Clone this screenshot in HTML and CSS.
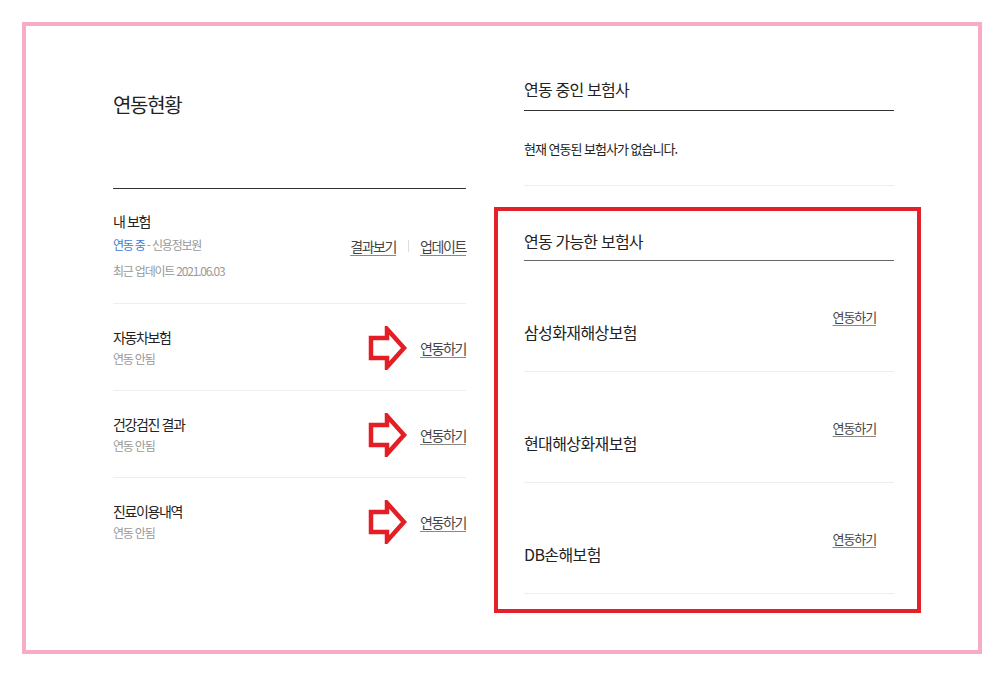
FILE: index.html
```html
<!DOCTYPE html>
<html lang="ko">
<head>
  <meta charset="UTF-8" />
  <meta name="viewport" content="width=device-width, initial-scale=1.0"/>
  <title>연동현황</title>
  <link rel="stylesheet" href="styles.css">
</head>
<body>

  <div class="frame">

    <!-- 왼쪽: 연동현황 -->
    <div class="status">
      <div class="status-head">
        <h1>연동현황</h1>
      </div>

      <div class="status-row first">
        <div class="info">
          <h2>내 보험</h2>
          <p class="state"><span class="on">연동 중</span> - 신용정보원</p>
          <p class="date">최근 업데이트 2021.06.03</p>
        </div>
        <div class="links">
          <a href="#">결과보기</a>
          <span class="sep"></span>
          <a href="#">업데이트</a>
        </div>
      </div>

      <div class="status-row">
        <div class="info">
          <h2>자동차보험</h2>
          <p class="state">연동 안됨</p>
        </div>
        <div class="links">
          <svg class="arrow" width="40" height="44" viewBox="0 0 40 44"><path d="M3 12 H19 V3 L36 22 L19 41 V32 H3 Z"/></svg>
          <a href="#">연동하기</a>
        </div>
      </div>

      <div class="status-row">
        <div class="info">
          <h2>건강검진 결과</h2>
          <p class="state">연동 안됨</p>
        </div>
        <div class="links">
          <svg class="arrow" width="40" height="44" viewBox="0 0 40 44"><path d="M3 12 H19 V3 L36 22 L19 41 V32 H3 Z"/></svg>
          <a href="#">연동하기</a>
        </div>
      </div>

      <div class="status-row last">
        <div class="info">
          <h2>진료이용내역</h2>
          <p class="state">연동 안됨</p>
        </div>
        <div class="links">
          <svg class="arrow" width="40" height="44" viewBox="0 0 40 44"><path d="M3 12 H19 V3 L36 22 L19 41 V32 H3 Z"/></svg>
          <a href="#">연동하기</a>
        </div>
      </div>
    </div>

    <!-- 오른쪽: 보험사 -->
    <div class="insurers">
      <div class="section current">
        <h3>연동 중인 보험사</h3>
        <p class="empty">현재 연동된 보험사가 없습니다.</p>
      </div>

      <div class="section available">
        <h3>연동 가능한 보험사</h3>
        <div class="company">
          <span class="name">삼성화재해상보험</span>
          <a href="#">연동하기</a>
        </div>
        <div class="company">
          <span class="name">현대해상화재보험</span>
          <a href="#">연동하기</a>
        </div>
        <div class="company">
          <span class="name">DB손해보험</span>
          <a href="#">연동하기</a>
        </div>
      </div>
    </div>

  </div>

</body>
</html>
```

FILE: styles.css
```css
body {
  margin: 0;
  background-color: #fff;
  font-family: "Noto Sans CJK KR", "Noto Sans", sans-serif;
  color: #222;
}

.frame {
  margin: 22px;
  width: 952px;
  height: 624px;
  border: 4px solid #f6abc7;
  display: flex;
  align-items: flex-start;
}

a {
  color: #444;
  text-decoration: underline;
  text-decoration-color: #888;
  text-underline-offset: 3px;
}

/* left column */
.status {
  width: 353px;
  margin: 51px 0 0 87px;
}

.status-head {
  padding: 13px 0 68px;
  border-bottom: 1px solid #333;
}

h1 {
  margin: 0;
  font-size: 20px;
  line-height: 30px;
  font-weight: 400;
  letter-spacing: -1.3px;
}

.status-row {
  display: flex;
  justify-content: space-between;
  align-items: center;
  padding: 23px 0 22px;
  border-bottom: 1px solid #eee;
}

.status-row.first {
  padding: 22px 0 23px;
}

.status-row.last {
  border-bottom: none;
}

.info h2 {
  margin: 0;
  font-size: 14px;
  line-height: 20px;
  font-weight: 400;
  letter-spacing: -1.4px;
}

.info p {
  margin: 0;
  font-size: 12px;
  line-height: 18px;
  color: #999;
  letter-spacing: -1.2px;
}

.info .state {
  margin-top: 3px;
}

.first .state {
  margin-top: 5px;
}

.info .date {
  margin-top: 8px;
}

.on {
  color: #3b7bd4;
}

.links {
  display: flex;
  align-items: center;
  font-size: 14px;
  letter-spacing: -1.4px;
}

.links a {
  line-height: 20px;
}

.sep {
  width: 1px;
  height: 12px;
  margin: 0 11px 0 12px;
  background-color: #ddd;
}

.arrow {
  margin: -2px 12px -2px 0;
}

.arrow path {
  fill: #fff;
  stroke: #e31e25;
  stroke-width: 4.5;
  stroke-linejoin: miter;
}

/* right column */
.insurers {
  width: 427px;
  margin: 51px 0 0 28px;
}

.section {
  padding: 0 27px 0 30px;
}

h3 {
  margin: 0;
  padding-bottom: 9px;
  font-size: 16px;
  line-height: 24px;
  font-weight: 400;
  letter-spacing: -0.8px;
  border-bottom: 1px solid #333;
}

.empty {
  margin: 0;
  padding: 28px 0 26px;
  font-size: 13px;
  line-height: 20px;
  letter-spacing: -1px;
  border-bottom: 1px solid #eee;
}

.available {
  margin-top: 21px;
  padding: 18px 23px 15px 26px;
  border: 4px solid #e3212b;
}

.available h3 {
  padding-bottom: 7px;
  border-bottom-color: #666;
}

.company {
  display: flex;
  justify-content: space-between;
  align-items: flex-start;
  padding: 46px 18px 27px 0;
  border-bottom: 1px solid #eee;
}

.company .name {
  margin-top: 13px;
  font-size: 16px;
  line-height: 24px;
  letter-spacing: -0.6px;
}

.company a {
  font-size: 13px;
  line-height: 20px;
  letter-spacing: -1.1px;
}
```
